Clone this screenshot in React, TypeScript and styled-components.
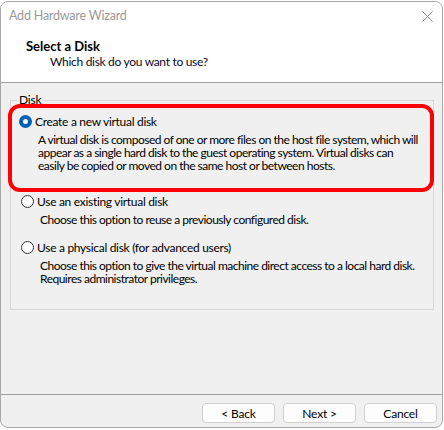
import React from 'react';
import styled, {createGlobalStyle} from 'styled-components';

const GlobalStyle = createGlobalStyle`
    body {
        margin: 0;
        background: #ffffff;
        font-family: Lato, 'Noto Sans', sans-serif;
    }
`;

const Window = styled.div`
    box-sizing: border-box;
    width: 443px;
    height: 427px;
    margin-top: 1px;
    border: 1px solid #a8a8a8;
    border-radius: 8px;
    overflow: hidden;
    display: flex;
    flex-direction: column;
    background: #f0f0f0;
    font-size: 12px;
    letter-spacing: -0.5px;
    color: #000;
`;

const TitleBar = styled.div`
    display: flex;
    align-items: center;
    height: 28px;
    padding: 0 9px 0 8px;
    background: #fff;
`;

const Title = styled.span`
    flex: 1;
    color: #9a9a9a;
    font-size: 12.5px;
    letter-spacing: -0.2px;
    padding-bottom: 1px;
`;

const Header = styled.div`
    display: flex;
    flex-direction: column;
    height: 53px;
    padding: 8px 0 0 25px;
    box-sizing: border-box;
    background: #fff;
    border-bottom: 1px solid #a0a0a0;
`;

const HeaderTitle = styled.span`
    font-size: 13px;
    font-weight: bold;
    line-height: 16px;
    letter-spacing: 0;
`;

const HeaderSub = styled.span`
    padding-left: 24px;
    line-height: 16px;
    letter-spacing: -0.3px;
    color: #0a0a28;
`;

const Body = styled.div`
    flex: 1;
    padding: 10px 8px 0 9px;
`;

const GroupBox = styled.fieldset`
    margin: 0;
    padding: 0 0 24px 0;
    border: 1px solid #d8d8d8;
    min-width: 0;
`;

const Legend = styled.legend`
    padding: 0 2px;
    margin-left: 6px;
    line-height: 14px;
    letter-spacing: -0.2px;
`;

const Option = styled.div<{highlight?: boolean}>`
    margin: ${p => (p.highlight ? '-3px -1px 1px -3px' : '0 0 13px 0')};
    padding: ${p => (p.highlight ? '5px 9px 16px 7px' : '0 6px 0 10px')};
    border: ${p => (p.highlight ? '4px solid #ff0000' : 'none')};
    border-radius: 12px;
    &:last-child {
        margin-bottom: 0;
    }
`;

const RadioRow = styled.label`
    display: flex;
    align-items: center;
    gap: 3px;
    height: 16px;
    letter-spacing: -0.3px;
`;

const Radio = styled.span<{checked?: boolean}>`
    box-sizing: border-box;
    width: 13px;
    height: 13px;
    border-radius: 50%;
    border: ${p => (p.checked ? '4px solid #005fb8' : '1px solid #333')};
    background: #fff;
`;

const Desc = styled.p`
    margin: 4px 0 0 19px;
    line-height: 13px;
`;

const Footer = styled.div`
    display: flex;
    justify-content: flex-end;
    gap: 8px;
    height: 33px;
    padding: 8px 5px 0 0;
    box-sizing: border-box;
    border-top: 1px solid #a0a0a0;
`;

const Button = styled.button`
    width: 73px;
    height: 20px;
    padding: 0;
    font-family: inherit;
    font-size: 12px;
    letter-spacing: -0.2px;
    color: #000;
    background: #fdfdfd;
    border: 1px solid #d0d0d0;
    border-radius: 4px;
`;

const CloseIcon = () => (
    <svg width="11" height="11" viewBox="0 0 11 11">
        <path d="M0.5 0.5 L10.5 10.5 M10.5 0.5 L0.5 10.5" stroke="#8a8a8a" strokeWidth="1" />
    </svg>
);

const options = [
    {
        label: 'Create a new virtual disk',
        desc: 'A virtual disk is composed of one or more files on the host file system, which will appear as a single hard disk to the guest operating system. Virtual disks can easily be copied or moved on the same host or between hosts.',
        checked: true,
    },
    {
        label: 'Use an existing virtual disk',
        desc: 'Choose this option to reuse a previously configured disk.',
    },
    {
        label: 'Use a physical disk (for advanced users)',
        desc: 'Choose this option to give the virtual machine direct access to a local hard disk. Requires administrator privileges.',
    },
];

export default function App() {
    return (
        <>
            <GlobalStyle />
            <Window>
                <TitleBar>
                    <Title>Add Hardware Wizard</Title>
                    <CloseIcon />
                </TitleBar>
                <Header>
                    <HeaderTitle>Select a Disk</HeaderTitle>
                    <HeaderSub>Which disk do you want to use?</HeaderSub>
                </Header>
                <Body>
                    <GroupBox>
                        <Legend>Disk</Legend>
                        {options.map(o => (
                            <Option key={o.label} highlight={o.checked}>
                                <RadioRow>
                                    <Radio checked={o.checked} />
                                    {o.label}
                                </RadioRow>
                                <Desc>{o.desc}</Desc>
                            </Option>
                        ))}
                    </GroupBox>
                </Body>
                <Footer>
                    <Button>&lt; Back</Button>
                    <Button>Next &gt;</Button>
                    <Button>Cancel</Button>
                </Footer>
            </Window>
        </>
    );
}
